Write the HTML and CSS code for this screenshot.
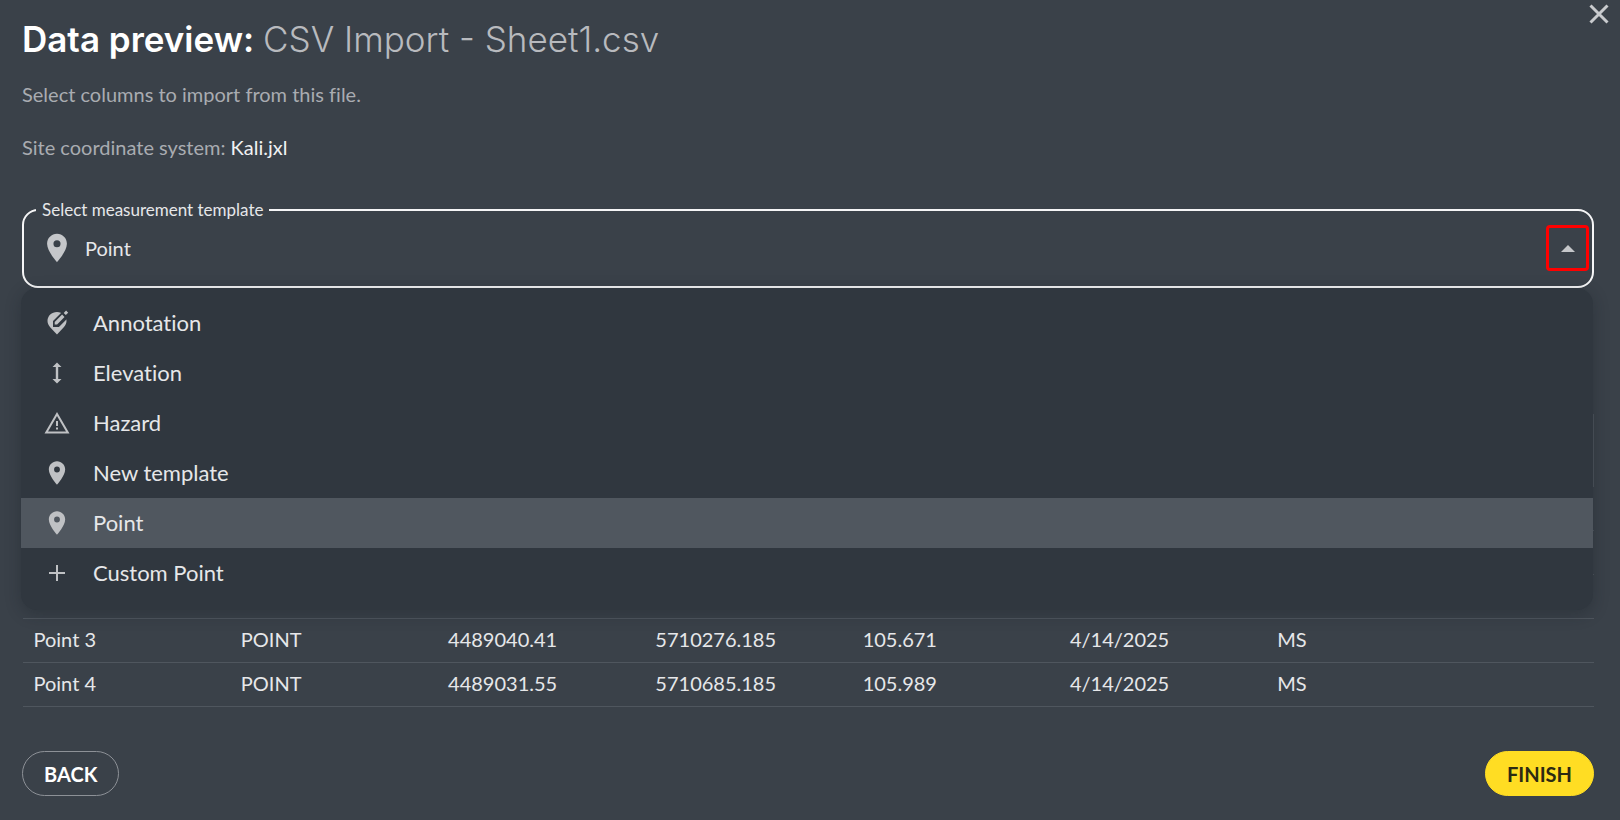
FILE: index.html
```html
<!DOCTYPE html>
<html lang="en">
<head>
<meta charset="utf-8">
<title>Data preview</title>
<link rel="stylesheet" href="styles.css">
</head>
<body>
<svg class="defs" aria-hidden="true">
  <symbol id="pin" viewBox="0 0 24 24"><path fill-rule="evenodd" d="M12 2C8.100 2 5 5.100 5 9c0 5.250 7 13 7 13s7-7.750 7-13c0-3.900-3.100-7-7-7zm0 9.500a2.500 2.500 0 1 1 0-5 2.500 2.500 0 0 1 0 5z"/></symbol>
</svg>
<main class="dialog">
  <button class="close" type="button" aria-label="Close">
    <svg class="icon-close" viewBox="0 0 20 20"><path d="M1.500 1.500l17 17M18.500 1.500l-17 17"/></svg>
  </button>
  <h1 class="title">Data preview: <span class="file-name">CSV Import - Sheet1.csv</span></h1>
  <p class="note">Select columns to import from this file.</p>
  <p class="note">Site coordinate system: <span class="strong">Kali.jxl</span></p>

  <div class="picker">
    <fieldset class="field">
      <legend class="legend"><label for="template">Select measurement template</label></legend>
      <svg class="icon-field"><use href="#pin"/></svg>
      <select class="select" id="template"><option>Point</option></select>
      <button class="toggle" type="button" aria-label="Close list" aria-expanded="true"><span class="arrow"></span></button>
    </fieldset>
    <ul class="menu">
      <li><button class="item" type="button">
        <svg class="icon" viewBox="0 0 24 24"><path d="M12 1C6.700 1 2.500 4.800 2.500 10c0 4.500 3.500 7 9.500 13.500C18 17 21.500 14.500 21.500 10 21.500 4.800 17.300 1 12 1z"/><path class="pen" d="M9 15v-4.500L18 1.500l4.500 4.500-9 9z"/><path d="M9.700 13.400v-2.400l7.400-7.400 2.400 2.400-7.400 7.400zM18.700 2l2.100 2.100 2.400-2.400-2.100-2.100z"/></svg>
        Annotation</button></li>
      <li><button class="item" type="button">
        <svg class="icon" viewBox="0 0 24 24"><path d="M13.200 6h3.300L12 1.500 7.500 6h3.300v12H7.500l4.500 4.500 4.500-4.500h-3.300z"/></svg>
        Elevation</button></li>
      <li><button class="item" type="button">
        <svg class="icon" viewBox="0 0 24 24"><path fill-rule="evenodd" d="M12 1L-.5 22.500h25zM12 5l9 15.500H3z"/><path d="M11 10h2v5h-2zM11 16.500h2v2h-2z"/></svg>
        Hazard</button></li>
      <li><button class="item" type="button">
        <svg class="icon icon-pin"><use href="#pin"/></svg>
        New template</button></li>
      <li><button class="item selected" type="button">
        <svg class="icon icon-pin"><use href="#pin"/></svg>
        Point</button></li>
      <li><button class="item" type="button">
        <svg class="icon" viewBox="0 0 24 24"><path d="M4 11h7V4h2v7h7v2h-7v7h-2v-7H4z"/></svg>
        Custom Point</button></li>
    </ul>
  </div>

  <table class="data">
    <colgroup><col span="7"><col class="rest"></colgroup>
    <thead><tr><th colspan="8"></th></tr></thead>
    <tbody>
      <tr><td colspan="8"></td></tr>
      <tr><td colspan="8"></td></tr>
      <tr><td colspan="8"></td></tr>
      <tr><td>Point 3</td><td>POINT</td><td>4489040.41</td><td>5710276.185</td><td>105.671</td><td>4/14/2025</td><td>MS</td><td></td></tr>
      <tr><td>Point 4</td><td>POINT</td><td>4489031.55</td><td>5710685.185</td><td>105.989</td><td>4/14/2025</td><td>MS</td><td></td></tr>
    </tbody>
  </table>

  <footer class="actions">
    <button class="btn" type="button">BACK</button>
    <button class="btn primary" type="button">FINISH</button>
  </footer>
</main>
</body>
</html>
```

FILE: styles.css
```css
* { box-sizing: border-box; }
body {
  margin: 0;
  min-height: 100vh;
  background: #3a4149;
  color: #e6e7e9;
  font: 20px/24px Lato, "Noto Sans", sans-serif;
  font-variant-ligatures: none;
}
button, select { font: inherit; font-variant-ligatures: none; color: inherit; border: 0; background: none; padding: 0; }
.defs { display: none; }
.dialog { position: relative; padding: 19px 26px 24px 22px; }
.close { position: absolute; top: 4px; right: 11px; width: 20px; height: 20px; }
.icon-close { display: block; width: 20px; height: 20px; fill: none; stroke: #c9cbce; stroke-width: 3; }
.title { margin: 0 0 23px; font: 600 35px/40px Inter, sans-serif; color: #fff; }
.file-name { font-weight: 300; color: #b8babe; }
.note { margin: 0 0 29px; color: #a9acb1; }
.note + .note { margin-bottom: 41px; }
.strong { color: #f0f1f2; }

.picker { position: relative; }
.field {
  display: flex;
  align-items: center;
  min-width: 0;
  height: 88px;
  margin: 0;
  padding: 0 3px 10px 12px;
  border: 2px solid #f5f5f6;
  border-radius: 16px;
}
.legend { padding: 0 6px; font-size: 17px; line-height: 20px; }
.icon-field { width: 34px; height: 34px; margin: 0 11px 0 4px; fill: #c5c7ca; }
.select { flex: 1; height: 40px; appearance: none; outline: 0; }
.toggle {
  display: grid;
  place-items: center;
  width: 43px;
  height: 46px;
  border: 3px solid #f00;
  border-radius: 4px;
}
.arrow { border: 7px solid transparent; border-top: 0; border-bottom: 7px solid #c5c7ca; }

.menu {
  position: absolute;
  top: 88px;
  left: -1px;
  right: 1px;
  margin: 0;
  padding: 10px 0 12px;
  list-style: none;
  background: #30373f;
  border-radius: 16px;
  box-shadow: 0 4px 16px rgba(20, 26, 34, .3);
}
.item {
  display: flex;
  align-items: center;
  gap: 24px;
  width: 100%;
  height: 50px;
  padding: 0 24px;
  font-size: 22px;
}
.selected { background: #50575f; }
.icon { width: 24px; height: 24px; fill: #bfc1c4; overflow: visible; }
.icon-pin { width: 28px; height: 28px; margin: 0 -2px; }
.pen { fill: #30373f; stroke: #30373f; stroke-width: 2; }

.data { width: 100%; margin-top: 126px; border-collapse: collapse; table-layout: fixed; }
.data th { height: 72px; border: 1px solid #4d545c; }
.data td { height: 44px; padding: 0 11px 3px; border-bottom: 1px solid #4f565e; }
.rest { width: 120px; }

.actions { display: flex; justify-content: space-between; margin-top: 44px; }
.btn { height: 45px; padding: 0 21px; border: 1px solid #8d9197; border-radius: 23px; font-weight: 700; color: #fff; }
.primary { border-color: #ffdd23; background: #ffdd23; color: #2c2a12; }
```
